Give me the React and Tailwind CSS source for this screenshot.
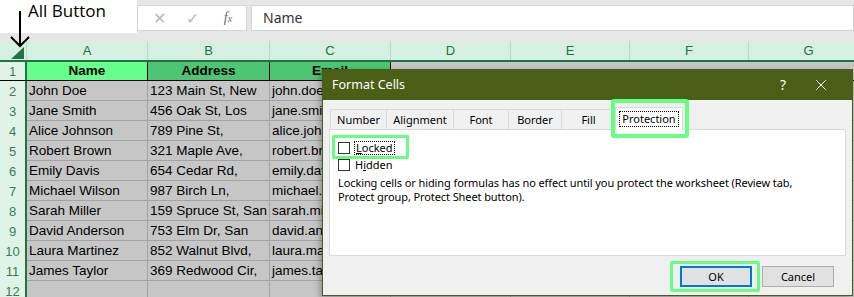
import { X } from 'lucide-react';

const cols = [
  { key: 'A', w: 'w-[121px]' },
  { key: 'B', w: 'w-[122px]' },
  { key: 'C', w: 'w-[121px]' },
  { key: 'D', w: 'w-[120px]' },
  { key: 'E', w: 'w-[119px]' },
  { key: 'F', w: 'w-[119px]' },
  { key: 'G', w: 'w-[120px]' },
];

const people = [
  ['John Doe', '123 Main St, New', 'john.doe@example.com'],
  ['Jane Smith', '456 Oak St, Los', 'jane.smith@example.com'],
  ['Alice Johnson', '789 Pine St,', 'alice.johnson@example.com'],
  ['Robert Brown', '321 Maple Ave,', 'robert.brown@example.com'],
  ['Emily Davis', '654 Cedar Rd,', 'emily.davis@example.com'],
  ['Michael Wilson', '987 Birch Ln,', 'michael.wilson@example.com'],
  ['Sarah Miller', '159 Spruce St, San', 'sarah.miller@example.com'],
  ['David Anderson', '753 Elm Dr, San', 'david.anderson@example.com'],
  ['Laura Martinez', '852 Walnut Blvd,', 'laura.martinez@example.com'],
  ['James Taylor', '369 Redwood Cir,', 'james.taylor@example.com'],
  ['', '', ''],
];

function FormulaBar() {
  return (
    <div className="flex h-[41px] bg-[#e6e6e6]">
      <div className="w-[137px] h-[33px] bg-white shrink-0 pl-[28px] pt-[1px] text-[17px] leading-[20px] text-black font-['Open_Sans',sans-serif]">
        All Button
      </div>
      <div className="mt-[5px] h-[26px] w-[110px] bg-white border border-[#d4d4d4] flex items-center text-[#b8b8b8] leading-none">
        <span className="w-[36px] flex justify-center text-[16px] pl-[6px]">✕</span>
        <span className="w-[36px] flex justify-center text-[16px]">✓</span>
        <span className="w-[36px] flex justify-center italic text-[#6a6a6a] text-[14px] font-['Liberation_Serif',serif]">
          f<span className="text-[10px] mt-[3px]">x</span>
        </span>
      </div>
      <div className="ml-[4px] mt-[5px] h-[26px] flex-1 bg-white border border-[#d4d4d4] flex items-center pl-[11px] text-[14px] leading-none text-[#333] font-['Noto_Sans',sans-serif]">
        Name
      </div>
    </div>
  );
}

function RowNum({ n }) {
  return (
    <div className="w-[27px] shrink-0 bg-[#dff4e6] border-r-2 border-[#217346] flex items-center justify-center text-[13px] leading-none text-[#3f7a55]">
      {n}
    </div>
  );
}

function Sheet() {
  return (
    <div className="font-['Liberation_Sans',sans-serif] text-[13.5px]">
      {/* column headers */}
      <div className="flex h-[19px] bg-[#d5f0e0]">
        <div className="w-[27px] shrink-0 relative border-r border-[#c4dccd]">
          <svg className="absolute right-[2px] bottom-[1px]" width="13" height="12" viewBox="0 0 13 12">
            <polygon points="13,0 13,12 0,12" fill="#217346" />
          </svg>
        </div>
        {cols.map((c) => (
          <div
            key={c.key}
            className={`${c.w} shrink-0 border-r border-[#bcd6c6] flex items-center justify-center text-[13px] leading-none text-[#217346]`}
          >
            {c.key}
          </div>
        ))}
      </div>
      <div className="h-[2px] bg-[#217346]" />
      {/* row 1 */}
      <div className="flex h-[19px] border-b border-black leading-none">
        <RowNum n={1} />
        <div className="w-[121px] shrink-0 bg-[#66ff8c] border-r border-black flex items-center justify-center font-bold">
          Name
        </div>
        <div className="w-[122px] shrink-0 bg-[#4ec572] border-r border-black flex items-center justify-center font-bold">
          Address
        </div>
        <div className="w-[121px] shrink-0 bg-[#4ec572] border-r border-black flex items-center justify-center font-bold">
          Email
        </div>
        <div className="flex-1 bg-[#c6c6c6]" />
      </div>
      {people.map((p, i) => (
        <div key={i} className="flex h-[20px]">
          <RowNum n={i + 2} />
          {cols.map((c, j) => (
            <div
              key={c.key}
              className={`${c.w} shrink-0 bg-[#c6c6c6] border-r border-b border-[#a3a3a3] pl-[2px] text-black whitespace-nowrap overflow-hidden leading-[19px]`}
            >
              {p[j] || ''}
            </div>
          ))}
        </div>
      ))}
    </div>
  );
}

function Dialog() {
  const tabs = [
    ['Number', 'w-[56px]'],
    ['Alignment', 'w-[67px]'],
    ['Font', 'w-[55px]'],
    ['Border', 'w-[53px]'],
    ['Fill', 'w-[54px]'],
  ];
  return (
    <div className="absolute left-[322px] top-[69px] w-[531px] h-[227px] bg-[#f0f0f0] border border-[#4b5e16] font-['Noto_Sans',sans-serif] text-[11px] text-black shadow-[-2px_2px_6px_rgba(0,0,0,0.3)]">
      <div className="h-[30px] bg-[#4b5e16] flex items-center pl-[9px] text-white text-[12.5px] leading-none">
        <span className="flex-1">Format Cells</span>
        <span className="w-[30px] text-center text-[14px] mr-[14px]">?</span>
        <X size={18} strokeWidth={1.3} className="mr-[22px]" />
      </div>
      <div className="px-[6px] pt-[9px]">
        <div className="flex items-end h-[20px] pl-[1px] leading-none">
          {tabs.map(([t, w]) => (
            <div
              key={t}
              className={`${w} h-[20px] border-t border-l border-[#d9d9d9] flex items-center justify-center text-[11px]`}
            >
              {t}
            </div>
          ))}
          <div className="relative w-[68px] h-[23px] mb-[-1px] bg-white border-l border-r border-t border-[#d9d9d9] flex items-center justify-center">
            <span className="border border-dotted border-black px-[2px] leading-[14px] text-[11px]">Protection</span>
            <div className="absolute -left-[5px] -top-[9px] w-[78px] h-[39px] border-[4px] border-[#66ff80] rounded-[3px]" />
          </div>
          <div className="flex-1" />
        </div>
        <div className="h-[127px] bg-white border border-[#d9d9d9] px-[8px] pt-[11px]">
          <div className="relative flex items-center h-[14px] gap-[4px] leading-[14px]">
            <span className="w-[12px] h-[12px] border border-[#333] bg-white" />
            <span className="border border-dotted border-black leading-[12px] px-[1px]">
              <span className="underline">L</span>ocked
            </span>
            <div className="absolute -left-[6px] -top-[6px] w-[77px] h-[24px] border-[3px] border-[#66ff80] rounded-[2px]" />
          </div>
          <div className="flex items-center h-[14px] gap-[5px] mt-[3px] leading-[14px]">
            <span className="w-[12px] h-[12px] border border-[#333] bg-white" />
            <span>
              H<span className="underline">i</span>dden
            </span>
          </div>
          <p className="mt-[4px] leading-[14px] text-[11px] tracking-[-0.1px]">
            Locking cells or hiding formulas has no effect until you protect the worksheet (Review tab,
            <br />
            Protect group, Protect Sheet button).
          </p>
        </div>
        <div className="flex justify-end gap-[10px] mt-[10px] pr-[12px] leading-none">
          <div className="relative w-[72px] h-[21px] bg-[#e1e1e1] border-2 border-[#0078d7] flex items-center justify-center">
            OK
            <div className="absolute -left-[12px] -top-[7px] w-[90px] h-[31px] border-[3px] border-[#66ff80] rounded-[2px]" />
          </div>
          <div className="w-[72px] h-[21px] bg-[#e1e1e1] border border-[#adadad] flex items-center justify-center">
            Cancel
          </div>
        </div>
      </div>
    </div>
  );
}

export default function App() {
  return (
    <div className="relative w-[854px] h-[297px] overflow-hidden bg-white">
      <FormulaBar />
      <Sheet />
      <svg className="absolute left-[8px] top-[11px]" width="24" height="38" viewBox="0 0 24 38">
        <line x1="12" y1="0" x2="12" y2="35" stroke="black" strokeWidth="2" />
        <polyline points="3,26 12,35 21,26" fill="none" stroke="black" strokeWidth="2" />
      </svg>
      <Dialog />
    </div>
  );
}
